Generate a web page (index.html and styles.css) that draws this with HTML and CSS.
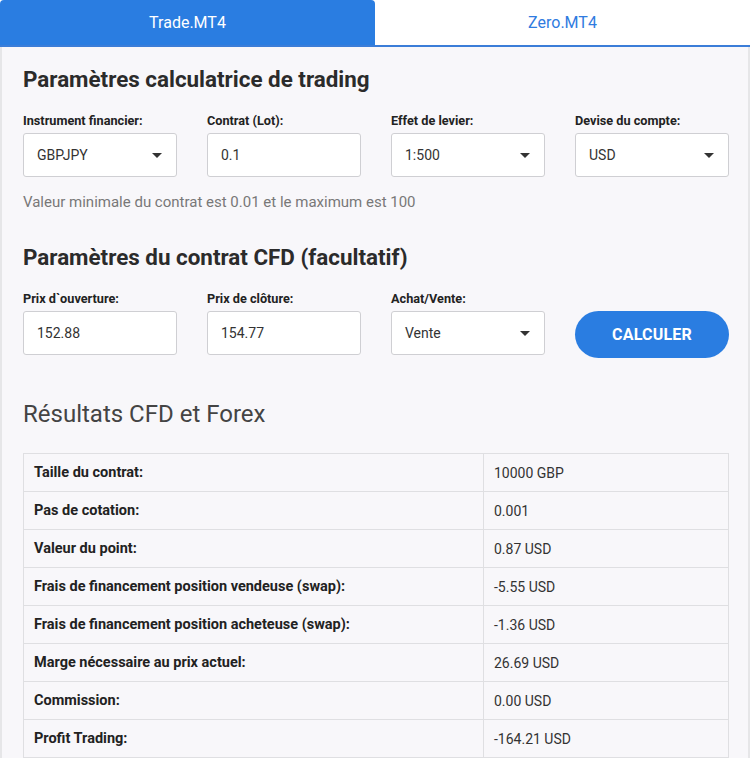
FILE: index.html
```html
<!DOCTYPE html>
<html lang="fr">
<head>
<meta charset="utf-8">
<link rel="stylesheet" href="styles.css">
</head>
<body>
<div class="tabs">
  <div class="tab active">Trade.MT4</div>
  <div class="tab">Zero.MT4</div>
</div>
<div class="panel">
  <h2 class="title">Paramètres calculatrice de trading</h2>
  <div class="row">
    <div class="field">
      <label>Instrument financier:</label>
      <div class="control select">GBPJPY<span class="caret"></span></div>
    </div>
    <div class="field">
      <label>Contrat (Lot):</label>
      <div class="control">0.1</div>
    </div>
    <div class="field">
      <label>Effet de levier:</label>
      <div class="control select">1:500<span class="caret"></span></div>
    </div>
    <div class="field">
      <label>Devise du compte:</label>
      <div class="control select">USD<span class="caret"></span></div>
    </div>
  </div>
  <p class="hint">Valeur minimale du contrat est 0.01 et le maximum est 100</p>
  <h2 class="title title2">Paramètres du contrat CFD (facultatif)</h2>
  <div class="row">
    <div class="field">
      <label>Prix d`ouverture:</label>
      <div class="control">152.88</div>
    </div>
    <div class="field">
      <label>Prix de clôture:</label>
      <div class="control">154.77</div>
    </div>
    <div class="field">
      <label>Achat/Vente:</label>
      <div class="control select">Vente<span class="caret"></span></div>
    </div>
    <div class="field btn-field">
      <button class="btn">CALCULER</button>
    </div>
  </div>
  <h3 class="results">Résultats CFD et Forex</h3>
  <table class="table">
    <tr><th>Taille du contrat:</th><td>10000 GBP</td></tr>
    <tr><th>Pas de cotation:</th><td>0.001</td></tr>
    <tr><th>Valeur du point:</th><td>0.87 USD</td></tr>
    <tr><th>Frais de financement position vendeuse (swap):</th><td>-5.55 USD</td></tr>
    <tr><th>Frais de financement position acheteuse (swap):</th><td>-1.36 USD</td></tr>
    <tr><th>Marge nécessaire au prix actuel:</th><td>26.69 USD</td></tr>
    <tr><th>Commission:</th><td>0.00 USD</td></tr>
    <tr><th>Profit Trading:</th><td>-164.21 USD</td></tr>
  </table>
</div>
</body>
</html>
```
FILE: styles.css
```css
* { box-sizing: border-box; }
html, body { margin: 0; padding: 0; }
body {
  font-family: Roboto, "Liberation Sans", Arial, sans-serif;
  background: #ffffff;
  color: #333;
  width: 750px;
  overflow: hidden;
}
.tabs {
  display: flex;
  height: 47px;
  border-bottom: 2px solid #3b7dd8;
}
.tab {
  flex: 1;
  text-align: center;
  font-size: 16px;
  line-height: 45px;
  color: #2f7be0;
}
.tab.active {
  background: #2a7de1;
  color: #fff;
  border-radius: 4px 4px 0 0;
}
.panel {
  background: #f8f7fa;
  border-left: 2px solid #e6e6e8;
  border-right: 2px solid #e6e6e8;
  padding: 18px 19px 0 21px;
  min-height: 720px;
}
.title {
  margin: 0;
  font-size: 22.4px;
  font-weight: 700;
  color: #2b2b2b;
  line-height: 28px;
}
.title2 { margin-top: 32px; }
.row {
  display: grid;
  grid-template-columns: repeat(4, 154px);
  column-gap: 30px;
  margin-top: 20px;
  align-items: end;
}
.field label {
  display: block;
  font-size: 12.7px;
  font-weight: 700;
  color: #222;
  line-height: 16px;
  margin-bottom: 4px;
}
.control {
  position: relative;
  height: 44px;
  background: #fff;
  border: 1px solid #cfcfd3;
  border-radius: 3px;
  padding: 0 13px;
  font-size: 14px;
  line-height: 42px;
  color: #333;
}
.caret {
  position: absolute;
  right: 14px;
  top: 19px;
  width: 0;
  height: 0;
  border-left: 5px solid transparent;
  border-right: 5px solid transparent;
  border-top: 5px solid #333;
}
.btn-field { display: flex; }
.btn {
  width: 154px;
  height: 47px;
  margin-bottom: -3px;
  border: none;
  border-radius: 24px;
  background: #2a7de1;
  color: #fff;
  font-family: inherit;
  font-size: 16px;
  font-weight: 700;
  letter-spacing: 0.2px;
}
.hint {
  margin: 16px 0 0;
  font-size: 15px;
  color: #787878;
  line-height: 18px;
}
.results {
  margin: 44px 0 0;
  font-size: 24px;
  font-weight: 400;
  color: #444;
  line-height: 30px;
}
.table {
  margin-top: 24px;
  width: 706px;
  border-collapse: collapse;
}
.table th, .table td {
  border: 1px solid #dfdfe2;
  height: 38px;
  padding: 0 10px;
  text-align: left;
  font-size: 14px;
  color: #333;
}
.table th {
  width: 460px;
  font-weight: 700;
  font-size: 14.5px;
  color: #222;
}
```
